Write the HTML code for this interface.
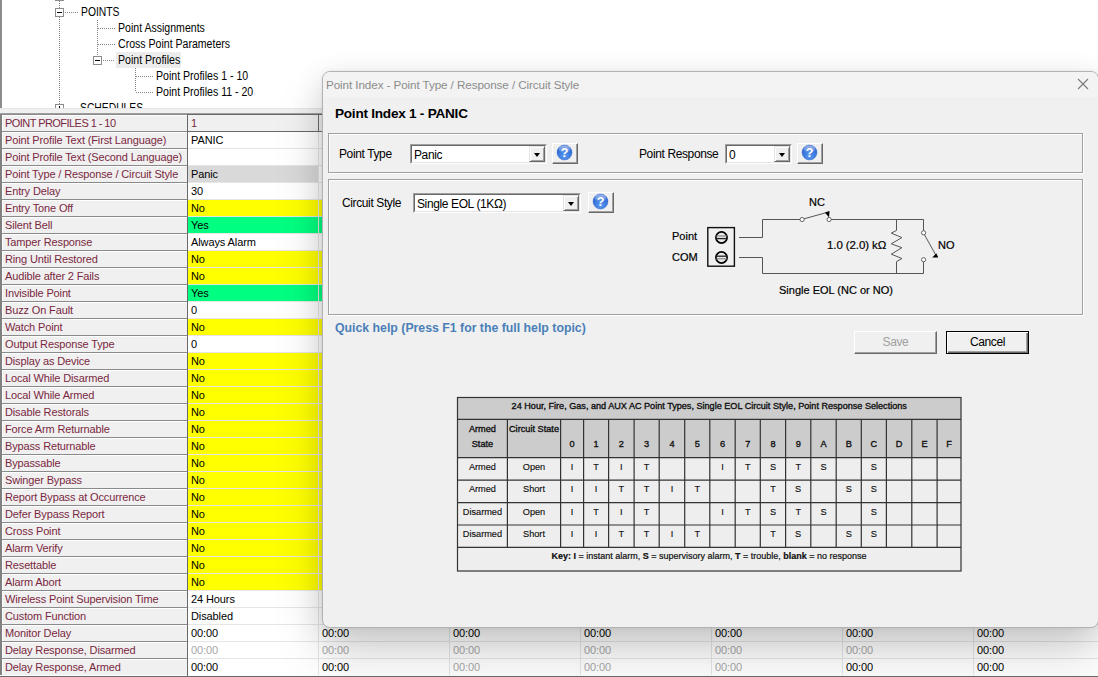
<!DOCTYPE html><html><head><meta charset='utf-8'><style>
*{margin:0;padding:0;box-sizing:border-box}
html,body{width:1098px;height:677px;overflow:hidden;background:#fff;font-family:"Liberation Sans", sans-serif;}
.a{position:absolute}
.t{position:absolute;white-space:nowrap;line-height:1}
.lbl{font-size:11px;color:#7a2840;letter-spacing:-0.14px}
.val{font-size:11px;color:#000;letter-spacing:-0.1px}
.tree{font-size:12px;color:#000;transform:scaleX(0.88);transform-origin:0 0}
.dotv{position:absolute;width:1px;background:repeating-linear-gradient(to bottom,#808080 0 1px,transparent 1px 2px)}
.doth{position:absolute;height:1px;background:repeating-linear-gradient(to right,#808080 0 1px,transparent 1px 2px)}
.box{position:absolute;width:9px;height:9px;border:1px solid #8c8c8c;background:#fff}
.box:after{content:"";position:absolute;left:1px;top:3px;width:5px;height:1px;background:#000}
.dlg{font-size:12px;letter-spacing:-0.38px;color:#000}
.combo{position:absolute;background:#fff;border-top:1px solid #a0a0a0;border-left:1px solid #a0a0a0;border-bottom:1px solid #fff;border-right:1px solid #fff;}
.combo>.in{position:absolute;left:0;top:0;right:0;bottom:0;border-top:1px solid #696969;border-left:1px solid #696969;border-bottom:1px solid #e3e3e3;border-right:1px solid #e3e3e3}
.drop{position:absolute;top:0;right:0;width:16px;bottom:0;background:#f0f0f0;border-top:1px solid #e3e3e3;border-left:1px solid #e3e3e3;border-right:1px solid #696969;border-bottom:1px solid #696969;box-shadow:inset 1px 1px 0 #fff,inset -1px -1px 0 #a0a0a0}
.drop:after{content:"";position:absolute;left:4px;top:6px;border-left:3.5px solid transparent;border-right:3.5px solid transparent;border-top:4px solid #000}
.btn{position:absolute;background:#f0f0f0;border-top:1px solid #fff;border-left:1px solid #fff;border-right:1px solid #696969;border-bottom:1px solid #696969;box-shadow:inset -1px -1px 0 #a0a0a0}
.plus:before{content:'';position:absolute;left:3px;top:1px;width:1px;height:5px;background:#000}
.grp{position:absolute;border:1px solid #a0a0a0;box-shadow:inset 1px 1px 0 #fff,1px 1px 0 #fff}
</style></head><body>
<div class='a' style='left:0;top:0;width:1098px;height:108px;background:#fff;border-left:2px solid #8c8c8c'></div>
<div class='dotv' style='left:59px;top:1px;height:7px'></div>
<div class='dotv' style='left:59px;top:17px;height:88px'></div>
<div class='box' style='left:55px;top:-8px'></div>
<div class='box' style='left:55px;top:8px'></div>
<div class='doth' style='left:65px;top:12px;width:13px'></div>
<div class='t tree' style='left:81px;top:6px;transform:scaleX(0.86)'>POINTS</div>
<div class='dotv' style='left:97px;top:20px;height:36px'></div>
<div class='doth' style='left:98px;top:28px;width:18px'></div>
<div class='t tree' style='left:118px;top:22px'>Point Assignments</div>
<div class='doth' style='left:98px;top:44px;width:18px'></div>
<div class='t tree' style='left:118px;top:38px'>Cross Point Parameters</div>
<div class='box' style='left:93px;top:56px'></div>
<div class='doth' style='left:103px;top:60px;width:12px'></div>
<div class='a' style='left:116px;top:52px;width:65px;height:16px;background:#ececec'></div>
<div class='t tree' style='left:118px;top:54px'>Point Profiles</div>
<div class='dotv' style='left:135px;top:68px;height:24px'></div>
<div class='doth' style='left:136px;top:76px;width:18px'></div>
<div class='t tree' style='left:156px;top:70px'>Point Profiles 1 - 10</div>
<div class='doth' style='left:136px;top:92px;width:18px'></div>
<div class='t tree' style='left:156px;top:86px'>Point Profiles 11 - 20</div>
<div class='box plus' style='left:55px;top:104px'></div>
<div class='t tree' style='left:80px;top:102px;transform:scaleX(0.86)'>SCHEDULES</div>
<div class='a' style='left:0;top:108px;width:1098px;height:5px;background:#f0f0f0;border-top:1px solid #e3e3e3'></div>
<div class='a' style='left:0;top:113px;width:1098px;height:1px;background:#a0a0a0'></div>
<div class='a' style='left:0;top:114px;width:1098px;height:563px;background:#fff'></div>
<div class='a' style='left:0;top:114px;width:187px;height:17px;background:#f0f0f0;border-top:1px solid #8a8a8a;border-left:2px solid #808080;box-shadow:inset 1px 1px 0 #fff'></div>
<div class='t lbl' style='left:5px;top:118px;letter-spacing:-0.55px'>POINT PROFILES 1 - 10</div>
<div class='a' style='left:188px;top:114px;width:910px;height:17px;border-top:1px solid #696969;background:#f0f0f0'></div>
<div class='t val' style='left:191px;top:118px;color:#7a2840'>1</div>
<div class='a' style='left:318px;top:115px;width:1px;height:16px;background:#696969'></div>
<div class='a' style='left:449px;top:115px;width:1px;height:16px;background:#696969'></div>
<div class='a' style='left:580px;top:115px;width:1px;height:16px;background:#696969'></div>
<div class='a' style='left:711px;top:115px;width:1px;height:16px;background:#696969'></div>
<div class='a' style='left:842px;top:115px;width:1px;height:16px;background:#696969'></div>
<div class='a' style='left:973px;top:115px;width:1px;height:16px;background:#696969'></div>
<div class='a' style='left:0;top:131px;width:187px;height:17px;background:#f0f0f0;border-top:1px solid #8a8a8a;border-left:2px solid #808080;box-shadow:inset 1px 1px 0 #fff'></div>
<div class='t lbl' style='left:5px;top:135px'>Point Profile Text (First Language)</div>
<div class='a' style='left:188px;top:131px;width:910px;height:17px;border-top:1px solid #696969;background:#ffffff'></div>
<div class='t val' style='left:191px;top:135px;color:#000'>PANIC</div>
<div class='a' style='left:318px;top:132px;width:1px;height:16px;background:#e6e6e6'></div>
<div class='a' style='left:449px;top:132px;width:1px;height:16px;background:#e6e6e6'></div>
<div class='a' style='left:580px;top:132px;width:1px;height:16px;background:#e6e6e6'></div>
<div class='a' style='left:711px;top:132px;width:1px;height:16px;background:#e6e6e6'></div>
<div class='a' style='left:842px;top:132px;width:1px;height:16px;background:#e6e6e6'></div>
<div class='a' style='left:973px;top:132px;width:1px;height:16px;background:#e6e6e6'></div>
<div class='a' style='left:0;top:148px;width:187px;height:17px;background:#f0f0f0;border-top:1px solid #8a8a8a;border-left:2px solid #808080;box-shadow:inset 1px 1px 0 #fff'></div>
<div class='t lbl' style='left:5px;top:152px'>Point Profile Text (Second Language)</div>
<div class='a' style='left:188px;top:148px;width:910px;height:17px;border-top:1px solid #e6e6e6;background:#ffffff'></div>
<div class='a' style='left:318px;top:149px;width:1px;height:16px;background:#e6e6e6'></div>
<div class='a' style='left:449px;top:149px;width:1px;height:16px;background:#e6e6e6'></div>
<div class='a' style='left:580px;top:149px;width:1px;height:16px;background:#e6e6e6'></div>
<div class='a' style='left:711px;top:149px;width:1px;height:16px;background:#e6e6e6'></div>
<div class='a' style='left:842px;top:149px;width:1px;height:16px;background:#e6e6e6'></div>
<div class='a' style='left:973px;top:149px;width:1px;height:16px;background:#e6e6e6'></div>
<div class='a' style='left:0;top:165px;width:187px;height:17px;background:#f0f0f0;border-top:1px solid #8a8a8a;border-left:2px solid #808080;box-shadow:inset 1px 1px 0 #fff'></div>
<div class='t lbl' style='left:5px;top:169px'>Point Type / Response / Circuit Style</div>
<div class='a' style='left:188px;top:165px;width:910px;height:17px;border-top:1px solid #e6e6e6;background:#fff'></div>
<div class='a' style='left:188px;top:166px;width:130px;height:16px;background:#d9d9d9'></div>
<div class='t val' style='left:191px;top:169px;color:#000'>Panic</div>
<div class='a' style='left:318px;top:166px;width:1px;height:16px;background:#e6e6e6'></div>
<div class='a' style='left:449px;top:166px;width:1px;height:16px;background:#e6e6e6'></div>
<div class='a' style='left:580px;top:166px;width:1px;height:16px;background:#e6e6e6'></div>
<div class='a' style='left:711px;top:166px;width:1px;height:16px;background:#e6e6e6'></div>
<div class='a' style='left:842px;top:166px;width:1px;height:16px;background:#e6e6e6'></div>
<div class='a' style='left:973px;top:166px;width:1px;height:16px;background:#e6e6e6'></div>
<div class='a' style='left:0;top:182px;width:187px;height:17px;background:#f0f0f0;border-top:1px solid #8a8a8a;border-left:2px solid #808080;box-shadow:inset 1px 1px 0 #fff'></div>
<div class='t lbl' style='left:5px;top:186px'>Entry Delay</div>
<div class='a' style='left:188px;top:182px;width:910px;height:17px;border-top:1px solid #e6e6e6;background:#ffffff'></div>
<div class='t val' style='left:191px;top:186px;color:#000'>30</div>
<div class='a' style='left:318px;top:183px;width:1px;height:16px;background:#e6e6e6'></div>
<div class='a' style='left:449px;top:183px;width:1px;height:16px;background:#e6e6e6'></div>
<div class='a' style='left:580px;top:183px;width:1px;height:16px;background:#e6e6e6'></div>
<div class='a' style='left:711px;top:183px;width:1px;height:16px;background:#e6e6e6'></div>
<div class='a' style='left:842px;top:183px;width:1px;height:16px;background:#e6e6e6'></div>
<div class='a' style='left:973px;top:183px;width:1px;height:16px;background:#e6e6e6'></div>
<div class='a' style='left:0;top:199px;width:187px;height:17px;background:#f0f0f0;border-top:1px solid #8a8a8a;border-left:2px solid #808080;box-shadow:inset 1px 1px 0 #fff'></div>
<div class='t lbl' style='left:5px;top:203px'>Entry Tone Off</div>
<div class='a' style='left:188px;top:199px;width:910px;height:17px;border-top:1px solid #e6e6e6;background:#ffff00'></div>
<div class='t val' style='left:191px;top:203px;color:#000'>No</div>
<div class='a' style='left:318px;top:200px;width:1px;height:16px;background:#e6e6e6'></div>
<div class='a' style='left:449px;top:200px;width:1px;height:16px;background:#e6e6e6'></div>
<div class='a' style='left:580px;top:200px;width:1px;height:16px;background:#e6e6e6'></div>
<div class='a' style='left:711px;top:200px;width:1px;height:16px;background:#e6e6e6'></div>
<div class='a' style='left:842px;top:200px;width:1px;height:16px;background:#e6e6e6'></div>
<div class='a' style='left:973px;top:200px;width:1px;height:16px;background:#e6e6e6'></div>
<div class='a' style='left:0;top:216px;width:187px;height:17px;background:#f0f0f0;border-top:1px solid #8a8a8a;border-left:2px solid #808080;box-shadow:inset 1px 1px 0 #fff'></div>
<div class='t lbl' style='left:5px;top:220px'>Silent Bell</div>
<div class='a' style='left:188px;top:216px;width:910px;height:17px;border-top:1px solid #e6e6e6;background:#00ff80'></div>
<div class='t val' style='left:191px;top:220px;color:#000'>Yes</div>
<div class='a' style='left:318px;top:217px;width:1px;height:16px;background:#e6e6e6'></div>
<div class='a' style='left:449px;top:217px;width:1px;height:16px;background:#e6e6e6'></div>
<div class='a' style='left:580px;top:217px;width:1px;height:16px;background:#e6e6e6'></div>
<div class='a' style='left:711px;top:217px;width:1px;height:16px;background:#e6e6e6'></div>
<div class='a' style='left:842px;top:217px;width:1px;height:16px;background:#e6e6e6'></div>
<div class='a' style='left:973px;top:217px;width:1px;height:16px;background:#e6e6e6'></div>
<div class='a' style='left:0;top:233px;width:187px;height:17px;background:#f0f0f0;border-top:1px solid #8a8a8a;border-left:2px solid #808080;box-shadow:inset 1px 1px 0 #fff'></div>
<div class='t lbl' style='left:5px;top:237px'>Tamper Response</div>
<div class='a' style='left:188px;top:233px;width:910px;height:17px;border-top:1px solid #e6e6e6;background:#ffffff'></div>
<div class='t val' style='left:191px;top:237px;color:#000'>Always Alarm</div>
<div class='a' style='left:318px;top:234px;width:1px;height:16px;background:#e6e6e6'></div>
<div class='a' style='left:449px;top:234px;width:1px;height:16px;background:#e6e6e6'></div>
<div class='a' style='left:580px;top:234px;width:1px;height:16px;background:#e6e6e6'></div>
<div class='a' style='left:711px;top:234px;width:1px;height:16px;background:#e6e6e6'></div>
<div class='a' style='left:842px;top:234px;width:1px;height:16px;background:#e6e6e6'></div>
<div class='a' style='left:973px;top:234px;width:1px;height:16px;background:#e6e6e6'></div>
<div class='a' style='left:0;top:250px;width:187px;height:17px;background:#f0f0f0;border-top:1px solid #8a8a8a;border-left:2px solid #808080;box-shadow:inset 1px 1px 0 #fff'></div>
<div class='t lbl' style='left:5px;top:254px'>Ring Until Restored</div>
<div class='a' style='left:188px;top:250px;width:910px;height:17px;border-top:1px solid #e6e6e6;background:#ffff00'></div>
<div class='t val' style='left:191px;top:254px;color:#000'>No</div>
<div class='a' style='left:318px;top:251px;width:1px;height:16px;background:#e6e6e6'></div>
<div class='a' style='left:449px;top:251px;width:1px;height:16px;background:#e6e6e6'></div>
<div class='a' style='left:580px;top:251px;width:1px;height:16px;background:#e6e6e6'></div>
<div class='a' style='left:711px;top:251px;width:1px;height:16px;background:#e6e6e6'></div>
<div class='a' style='left:842px;top:251px;width:1px;height:16px;background:#e6e6e6'></div>
<div class='a' style='left:973px;top:251px;width:1px;height:16px;background:#e6e6e6'></div>
<div class='a' style='left:0;top:267px;width:187px;height:17px;background:#f0f0f0;border-top:1px solid #8a8a8a;border-left:2px solid #808080;box-shadow:inset 1px 1px 0 #fff'></div>
<div class='t lbl' style='left:5px;top:271px'>Audible after 2 Fails</div>
<div class='a' style='left:188px;top:267px;width:910px;height:17px;border-top:1px solid #e6e6e6;background:#ffff00'></div>
<div class='t val' style='left:191px;top:271px;color:#000'>No</div>
<div class='a' style='left:318px;top:268px;width:1px;height:16px;background:#e6e6e6'></div>
<div class='a' style='left:449px;top:268px;width:1px;height:16px;background:#e6e6e6'></div>
<div class='a' style='left:580px;top:268px;width:1px;height:16px;background:#e6e6e6'></div>
<div class='a' style='left:711px;top:268px;width:1px;height:16px;background:#e6e6e6'></div>
<div class='a' style='left:842px;top:268px;width:1px;height:16px;background:#e6e6e6'></div>
<div class='a' style='left:973px;top:268px;width:1px;height:16px;background:#e6e6e6'></div>
<div class='a' style='left:0;top:284px;width:187px;height:17px;background:#f0f0f0;border-top:1px solid #8a8a8a;border-left:2px solid #808080;box-shadow:inset 1px 1px 0 #fff'></div>
<div class='t lbl' style='left:5px;top:288px'>Invisible Point</div>
<div class='a' style='left:188px;top:284px;width:910px;height:17px;border-top:1px solid #e6e6e6;background:#00ff80'></div>
<div class='t val' style='left:191px;top:288px;color:#000'>Yes</div>
<div class='a' style='left:318px;top:285px;width:1px;height:16px;background:#e6e6e6'></div>
<div class='a' style='left:449px;top:285px;width:1px;height:16px;background:#e6e6e6'></div>
<div class='a' style='left:580px;top:285px;width:1px;height:16px;background:#e6e6e6'></div>
<div class='a' style='left:711px;top:285px;width:1px;height:16px;background:#e6e6e6'></div>
<div class='a' style='left:842px;top:285px;width:1px;height:16px;background:#e6e6e6'></div>
<div class='a' style='left:973px;top:285px;width:1px;height:16px;background:#e6e6e6'></div>
<div class='a' style='left:0;top:301px;width:187px;height:17px;background:#f0f0f0;border-top:1px solid #8a8a8a;border-left:2px solid #808080;box-shadow:inset 1px 1px 0 #fff'></div>
<div class='t lbl' style='left:5px;top:305px'>Buzz On Fault</div>
<div class='a' style='left:188px;top:301px;width:910px;height:17px;border-top:1px solid #e6e6e6;background:#ffffff'></div>
<div class='t val' style='left:191px;top:305px;color:#000'>0</div>
<div class='a' style='left:318px;top:302px;width:1px;height:16px;background:#e6e6e6'></div>
<div class='a' style='left:449px;top:302px;width:1px;height:16px;background:#e6e6e6'></div>
<div class='a' style='left:580px;top:302px;width:1px;height:16px;background:#e6e6e6'></div>
<div class='a' style='left:711px;top:302px;width:1px;height:16px;background:#e6e6e6'></div>
<div class='a' style='left:842px;top:302px;width:1px;height:16px;background:#e6e6e6'></div>
<div class='a' style='left:973px;top:302px;width:1px;height:16px;background:#e6e6e6'></div>
<div class='a' style='left:0;top:318px;width:187px;height:17px;background:#f0f0f0;border-top:1px solid #8a8a8a;border-left:2px solid #808080;box-shadow:inset 1px 1px 0 #fff'></div>
<div class='t lbl' style='left:5px;top:322px'>Watch Point</div>
<div class='a' style='left:188px;top:318px;width:910px;height:17px;border-top:1px solid #e6e6e6;background:#ffff00'></div>
<div class='t val' style='left:191px;top:322px;color:#000'>No</div>
<div class='a' style='left:318px;top:319px;width:1px;height:16px;background:#e6e6e6'></div>
<div class='a' style='left:449px;top:319px;width:1px;height:16px;background:#e6e6e6'></div>
<div class='a' style='left:580px;top:319px;width:1px;height:16px;background:#e6e6e6'></div>
<div class='a' style='left:711px;top:319px;width:1px;height:16px;background:#e6e6e6'></div>
<div class='a' style='left:842px;top:319px;width:1px;height:16px;background:#e6e6e6'></div>
<div class='a' style='left:973px;top:319px;width:1px;height:16px;background:#e6e6e6'></div>
<div class='a' style='left:0;top:335px;width:187px;height:17px;background:#f0f0f0;border-top:1px solid #8a8a8a;border-left:2px solid #808080;box-shadow:inset 1px 1px 0 #fff'></div>
<div class='t lbl' style='left:5px;top:339px'>Output Response Type</div>
<div class='a' style='left:188px;top:335px;width:910px;height:17px;border-top:1px solid #e6e6e6;background:#ffffff'></div>
<div class='t val' style='left:191px;top:339px;color:#000'>0</div>
<div class='a' style='left:318px;top:336px;width:1px;height:16px;background:#e6e6e6'></div>
<div class='a' style='left:449px;top:336px;width:1px;height:16px;background:#e6e6e6'></div>
<div class='a' style='left:580px;top:336px;width:1px;height:16px;background:#e6e6e6'></div>
<div class='a' style='left:711px;top:336px;width:1px;height:16px;background:#e6e6e6'></div>
<div class='a' style='left:842px;top:336px;width:1px;height:16px;background:#e6e6e6'></div>
<div class='a' style='left:973px;top:336px;width:1px;height:16px;background:#e6e6e6'></div>
<div class='a' style='left:0;top:352px;width:187px;height:17px;background:#f0f0f0;border-top:1px solid #8a8a8a;border-left:2px solid #808080;box-shadow:inset 1px 1px 0 #fff'></div>
<div class='t lbl' style='left:5px;top:356px'>Display as Device</div>
<div class='a' style='left:188px;top:352px;width:910px;height:17px;border-top:1px solid #e6e6e6;background:#ffff00'></div>
<div class='t val' style='left:191px;top:356px;color:#000'>No</div>
<div class='a' style='left:318px;top:353px;width:1px;height:16px;background:#e6e6e6'></div>
<div class='a' style='left:449px;top:353px;width:1px;height:16px;background:#e6e6e6'></div>
<div class='a' style='left:580px;top:353px;width:1px;height:16px;background:#e6e6e6'></div>
<div class='a' style='left:711px;top:353px;width:1px;height:16px;background:#e6e6e6'></div>
<div class='a' style='left:842px;top:353px;width:1px;height:16px;background:#e6e6e6'></div>
<div class='a' style='left:973px;top:353px;width:1px;height:16px;background:#e6e6e6'></div>
<div class='a' style='left:0;top:369px;width:187px;height:17px;background:#f0f0f0;border-top:1px solid #8a8a8a;border-left:2px solid #808080;box-shadow:inset 1px 1px 0 #fff'></div>
<div class='t lbl' style='left:5px;top:373px'>Local While Disarmed</div>
<div class='a' style='left:188px;top:369px;width:910px;height:17px;border-top:1px solid #e6e6e6;background:#ffff00'></div>
<div class='t val' style='left:191px;top:373px;color:#000'>No</div>
<div class='a' style='left:318px;top:370px;width:1px;height:16px;background:#e6e6e6'></div>
<div class='a' style='left:449px;top:370px;width:1px;height:16px;background:#e6e6e6'></div>
<div class='a' style='left:580px;top:370px;width:1px;height:16px;background:#e6e6e6'></div>
<div class='a' style='left:711px;top:370px;width:1px;height:16px;background:#e6e6e6'></div>
<div class='a' style='left:842px;top:370px;width:1px;height:16px;background:#e6e6e6'></div>
<div class='a' style='left:973px;top:370px;width:1px;height:16px;background:#e6e6e6'></div>
<div class='a' style='left:0;top:386px;width:187px;height:17px;background:#f0f0f0;border-top:1px solid #8a8a8a;border-left:2px solid #808080;box-shadow:inset 1px 1px 0 #fff'></div>
<div class='t lbl' style='left:5px;top:390px'>Local While Armed</div>
<div class='a' style='left:188px;top:386px;width:910px;height:17px;border-top:1px solid #e6e6e6;background:#ffff00'></div>
<div class='t val' style='left:191px;top:390px;color:#000'>No</div>
<div class='a' style='left:318px;top:387px;width:1px;height:16px;background:#e6e6e6'></div>
<div class='a' style='left:449px;top:387px;width:1px;height:16px;background:#e6e6e6'></div>
<div class='a' style='left:580px;top:387px;width:1px;height:16px;background:#e6e6e6'></div>
<div class='a' style='left:711px;top:387px;width:1px;height:16px;background:#e6e6e6'></div>
<div class='a' style='left:842px;top:387px;width:1px;height:16px;background:#e6e6e6'></div>
<div class='a' style='left:973px;top:387px;width:1px;height:16px;background:#e6e6e6'></div>
<div class='a' style='left:0;top:403px;width:187px;height:17px;background:#f0f0f0;border-top:1px solid #8a8a8a;border-left:2px solid #808080;box-shadow:inset 1px 1px 0 #fff'></div>
<div class='t lbl' style='left:5px;top:407px'>Disable Restorals</div>
<div class='a' style='left:188px;top:403px;width:910px;height:17px;border-top:1px solid #e6e6e6;background:#ffff00'></div>
<div class='t val' style='left:191px;top:407px;color:#000'>No</div>
<div class='a' style='left:318px;top:404px;width:1px;height:16px;background:#e6e6e6'></div>
<div class='a' style='left:449px;top:404px;width:1px;height:16px;background:#e6e6e6'></div>
<div class='a' style='left:580px;top:404px;width:1px;height:16px;background:#e6e6e6'></div>
<div class='a' style='left:711px;top:404px;width:1px;height:16px;background:#e6e6e6'></div>
<div class='a' style='left:842px;top:404px;width:1px;height:16px;background:#e6e6e6'></div>
<div class='a' style='left:973px;top:404px;width:1px;height:16px;background:#e6e6e6'></div>
<div class='a' style='left:0;top:420px;width:187px;height:17px;background:#f0f0f0;border-top:1px solid #8a8a8a;border-left:2px solid #808080;box-shadow:inset 1px 1px 0 #fff'></div>
<div class='t lbl' style='left:5px;top:424px'>Force Arm Returnable</div>
<div class='a' style='left:188px;top:420px;width:910px;height:17px;border-top:1px solid #e6e6e6;background:#ffff00'></div>
<div class='t val' style='left:191px;top:424px;color:#000'>No</div>
<div class='a' style='left:318px;top:421px;width:1px;height:16px;background:#e6e6e6'></div>
<div class='a' style='left:449px;top:421px;width:1px;height:16px;background:#e6e6e6'></div>
<div class='a' style='left:580px;top:421px;width:1px;height:16px;background:#e6e6e6'></div>
<div class='a' style='left:711px;top:421px;width:1px;height:16px;background:#e6e6e6'></div>
<div class='a' style='left:842px;top:421px;width:1px;height:16px;background:#e6e6e6'></div>
<div class='a' style='left:973px;top:421px;width:1px;height:16px;background:#e6e6e6'></div>
<div class='a' style='left:0;top:437px;width:187px;height:17px;background:#f0f0f0;border-top:1px solid #8a8a8a;border-left:2px solid #808080;box-shadow:inset 1px 1px 0 #fff'></div>
<div class='t lbl' style='left:5px;top:441px'>Bypass Returnable</div>
<div class='a' style='left:188px;top:437px;width:910px;height:17px;border-top:1px solid #e6e6e6;background:#ffff00'></div>
<div class='t val' style='left:191px;top:441px;color:#000'>No</div>
<div class='a' style='left:318px;top:438px;width:1px;height:16px;background:#e6e6e6'></div>
<div class='a' style='left:449px;top:438px;width:1px;height:16px;background:#e6e6e6'></div>
<div class='a' style='left:580px;top:438px;width:1px;height:16px;background:#e6e6e6'></div>
<div class='a' style='left:711px;top:438px;width:1px;height:16px;background:#e6e6e6'></div>
<div class='a' style='left:842px;top:438px;width:1px;height:16px;background:#e6e6e6'></div>
<div class='a' style='left:973px;top:438px;width:1px;height:16px;background:#e6e6e6'></div>
<div class='a' style='left:0;top:454px;width:187px;height:17px;background:#f0f0f0;border-top:1px solid #8a8a8a;border-left:2px solid #808080;box-shadow:inset 1px 1px 0 #fff'></div>
<div class='t lbl' style='left:5px;top:458px'>Bypassable</div>
<div class='a' style='left:188px;top:454px;width:910px;height:17px;border-top:1px solid #e6e6e6;background:#ffff00'></div>
<div class='t val' style='left:191px;top:458px;color:#000'>No</div>
<div class='a' style='left:318px;top:455px;width:1px;height:16px;background:#e6e6e6'></div>
<div class='a' style='left:449px;top:455px;width:1px;height:16px;background:#e6e6e6'></div>
<div class='a' style='left:580px;top:455px;width:1px;height:16px;background:#e6e6e6'></div>
<div class='a' style='left:711px;top:455px;width:1px;height:16px;background:#e6e6e6'></div>
<div class='a' style='left:842px;top:455px;width:1px;height:16px;background:#e6e6e6'></div>
<div class='a' style='left:973px;top:455px;width:1px;height:16px;background:#e6e6e6'></div>
<div class='a' style='left:0;top:471px;width:187px;height:17px;background:#f0f0f0;border-top:1px solid #8a8a8a;border-left:2px solid #808080;box-shadow:inset 1px 1px 0 #fff'></div>
<div class='t lbl' style='left:5px;top:475px'>Swinger Bypass</div>
<div class='a' style='left:188px;top:471px;width:910px;height:17px;border-top:1px solid #e6e6e6;background:#ffff00'></div>
<div class='t val' style='left:191px;top:475px;color:#000'>No</div>
<div class='a' style='left:318px;top:472px;width:1px;height:16px;background:#e6e6e6'></div>
<div class='a' style='left:449px;top:472px;width:1px;height:16px;background:#e6e6e6'></div>
<div class='a' style='left:580px;top:472px;width:1px;height:16px;background:#e6e6e6'></div>
<div class='a' style='left:711px;top:472px;width:1px;height:16px;background:#e6e6e6'></div>
<div class='a' style='left:842px;top:472px;width:1px;height:16px;background:#e6e6e6'></div>
<div class='a' style='left:973px;top:472px;width:1px;height:16px;background:#e6e6e6'></div>
<div class='a' style='left:0;top:488px;width:187px;height:17px;background:#f0f0f0;border-top:1px solid #8a8a8a;border-left:2px solid #808080;box-shadow:inset 1px 1px 0 #fff'></div>
<div class='t lbl' style='left:5px;top:492px'>Report Bypass at Occurrence</div>
<div class='a' style='left:188px;top:488px;width:910px;height:17px;border-top:1px solid #e6e6e6;background:#ffff00'></div>
<div class='t val' style='left:191px;top:492px;color:#000'>No</div>
<div class='a' style='left:318px;top:489px;width:1px;height:16px;background:#e6e6e6'></div>
<div class='a' style='left:449px;top:489px;width:1px;height:16px;background:#e6e6e6'></div>
<div class='a' style='left:580px;top:489px;width:1px;height:16px;background:#e6e6e6'></div>
<div class='a' style='left:711px;top:489px;width:1px;height:16px;background:#e6e6e6'></div>
<div class='a' style='left:842px;top:489px;width:1px;height:16px;background:#e6e6e6'></div>
<div class='a' style='left:973px;top:489px;width:1px;height:16px;background:#e6e6e6'></div>
<div class='a' style='left:0;top:505px;width:187px;height:17px;background:#f0f0f0;border-top:1px solid #8a8a8a;border-left:2px solid #808080;box-shadow:inset 1px 1px 0 #fff'></div>
<div class='t lbl' style='left:5px;top:509px'>Defer Bypass Report</div>
<div class='a' style='left:188px;top:505px;width:910px;height:17px;border-top:1px solid #e6e6e6;background:#ffff00'></div>
<div class='t val' style='left:191px;top:509px;color:#000'>No</div>
<div class='a' style='left:318px;top:506px;width:1px;height:16px;background:#e6e6e6'></div>
<div class='a' style='left:449px;top:506px;width:1px;height:16px;background:#e6e6e6'></div>
<div class='a' style='left:580px;top:506px;width:1px;height:16px;background:#e6e6e6'></div>
<div class='a' style='left:711px;top:506px;width:1px;height:16px;background:#e6e6e6'></div>
<div class='a' style='left:842px;top:506px;width:1px;height:16px;background:#e6e6e6'></div>
<div class='a' style='left:973px;top:506px;width:1px;height:16px;background:#e6e6e6'></div>
<div class='a' style='left:0;top:522px;width:187px;height:17px;background:#f0f0f0;border-top:1px solid #8a8a8a;border-left:2px solid #808080;box-shadow:inset 1px 1px 0 #fff'></div>
<div class='t lbl' style='left:5px;top:526px'>Cross Point</div>
<div class='a' style='left:188px;top:522px;width:910px;height:17px;border-top:1px solid #e6e6e6;background:#ffff00'></div>
<div class='t val' style='left:191px;top:526px;color:#000'>No</div>
<div class='a' style='left:318px;top:523px;width:1px;height:16px;background:#e6e6e6'></div>
<div class='a' style='left:449px;top:523px;width:1px;height:16px;background:#e6e6e6'></div>
<div class='a' style='left:580px;top:523px;width:1px;height:16px;background:#e6e6e6'></div>
<div class='a' style='left:711px;top:523px;width:1px;height:16px;background:#e6e6e6'></div>
<div class='a' style='left:842px;top:523px;width:1px;height:16px;background:#e6e6e6'></div>
<div class='a' style='left:973px;top:523px;width:1px;height:16px;background:#e6e6e6'></div>
<div class='a' style='left:0;top:539px;width:187px;height:17px;background:#f0f0f0;border-top:1px solid #8a8a8a;border-left:2px solid #808080;box-shadow:inset 1px 1px 0 #fff'></div>
<div class='t lbl' style='left:5px;top:543px'>Alarm Verify</div>
<div class='a' style='left:188px;top:539px;width:910px;height:17px;border-top:1px solid #e6e6e6;background:#ffff00'></div>
<div class='t val' style='left:191px;top:543px;color:#000'>No</div>
<div class='a' style='left:318px;top:540px;width:1px;height:16px;background:#e6e6e6'></div>
<div class='a' style='left:449px;top:540px;width:1px;height:16px;background:#e6e6e6'></div>
<div class='a' style='left:580px;top:540px;width:1px;height:16px;background:#e6e6e6'></div>
<div class='a' style='left:711px;top:540px;width:1px;height:16px;background:#e6e6e6'></div>
<div class='a' style='left:842px;top:540px;width:1px;height:16px;background:#e6e6e6'></div>
<div class='a' style='left:973px;top:540px;width:1px;height:16px;background:#e6e6e6'></div>
<div class='a' style='left:0;top:556px;width:187px;height:17px;background:#f0f0f0;border-top:1px solid #8a8a8a;border-left:2px solid #808080;box-shadow:inset 1px 1px 0 #fff'></div>
<div class='t lbl' style='left:5px;top:560px'>Resettable</div>
<div class='a' style='left:188px;top:556px;width:910px;height:17px;border-top:1px solid #e6e6e6;background:#ffff00'></div>
<div class='t val' style='left:191px;top:560px;color:#000'>No</div>
<div class='a' style='left:318px;top:557px;width:1px;height:16px;background:#e6e6e6'></div>
<div class='a' style='left:449px;top:557px;width:1px;height:16px;background:#e6e6e6'></div>
<div class='a' style='left:580px;top:557px;width:1px;height:16px;background:#e6e6e6'></div>
<div class='a' style='left:711px;top:557px;width:1px;height:16px;background:#e6e6e6'></div>
<div class='a' style='left:842px;top:557px;width:1px;height:16px;background:#e6e6e6'></div>
<div class='a' style='left:973px;top:557px;width:1px;height:16px;background:#e6e6e6'></div>
<div class='a' style='left:0;top:573px;width:187px;height:17px;background:#f0f0f0;border-top:1px solid #8a8a8a;border-left:2px solid #808080;box-shadow:inset 1px 1px 0 #fff'></div>
<div class='t lbl' style='left:5px;top:577px'>Alarm Abort</div>
<div class='a' style='left:188px;top:573px;width:910px;height:17px;border-top:1px solid #e6e6e6;background:#ffff00'></div>
<div class='t val' style='left:191px;top:577px;color:#000'>No</div>
<div class='a' style='left:318px;top:574px;width:1px;height:16px;background:#e6e6e6'></div>
<div class='a' style='left:449px;top:574px;width:1px;height:16px;background:#e6e6e6'></div>
<div class='a' style='left:580px;top:574px;width:1px;height:16px;background:#e6e6e6'></div>
<div class='a' style='left:711px;top:574px;width:1px;height:16px;background:#e6e6e6'></div>
<div class='a' style='left:842px;top:574px;width:1px;height:16px;background:#e6e6e6'></div>
<div class='a' style='left:973px;top:574px;width:1px;height:16px;background:#e6e6e6'></div>
<div class='a' style='left:0;top:590px;width:187px;height:17px;background:#f0f0f0;border-top:1px solid #8a8a8a;border-left:2px solid #808080;box-shadow:inset 1px 1px 0 #fff'></div>
<div class='t lbl' style='left:5px;top:594px'>Wireless Point Supervision Time</div>
<div class='a' style='left:188px;top:590px;width:910px;height:17px;border-top:1px solid #e6e6e6;background:#ffffff'></div>
<div class='t val' style='left:191px;top:594px;color:#000'>24 Hours</div>
<div class='a' style='left:318px;top:591px;width:1px;height:16px;background:#e6e6e6'></div>
<div class='a' style='left:449px;top:591px;width:1px;height:16px;background:#e6e6e6'></div>
<div class='a' style='left:580px;top:591px;width:1px;height:16px;background:#e6e6e6'></div>
<div class='a' style='left:711px;top:591px;width:1px;height:16px;background:#e6e6e6'></div>
<div class='a' style='left:842px;top:591px;width:1px;height:16px;background:#e6e6e6'></div>
<div class='a' style='left:973px;top:591px;width:1px;height:16px;background:#e6e6e6'></div>
<div class='a' style='left:0;top:607px;width:187px;height:17px;background:#f0f0f0;border-top:1px solid #8a8a8a;border-left:2px solid #808080;box-shadow:inset 1px 1px 0 #fff'></div>
<div class='t lbl' style='left:5px;top:611px'>Custom Function</div>
<div class='a' style='left:188px;top:607px;width:910px;height:17px;border-top:1px solid #e6e6e6;background:#ffffff'></div>
<div class='t val' style='left:191px;top:611px;color:#000'>Disabled</div>
<div class='a' style='left:318px;top:608px;width:1px;height:16px;background:#e6e6e6'></div>
<div class='a' style='left:449px;top:608px;width:1px;height:16px;background:#e6e6e6'></div>
<div class='a' style='left:580px;top:608px;width:1px;height:16px;background:#e6e6e6'></div>
<div class='a' style='left:711px;top:608px;width:1px;height:16px;background:#e6e6e6'></div>
<div class='a' style='left:842px;top:608px;width:1px;height:16px;background:#e6e6e6'></div>
<div class='a' style='left:973px;top:608px;width:1px;height:16px;background:#e6e6e6'></div>
<div class='a' style='left:0;top:624px;width:187px;height:17px;background:#f0f0f0;border-top:1px solid #8a8a8a;border-left:2px solid #808080;box-shadow:inset 1px 1px 0 #fff'></div>
<div class='t lbl' style='left:5px;top:628px'>Monitor Delay</div>
<div class='a' style='left:188px;top:624px;width:910px;height:17px;border-top:1px solid #e6e6e6;background:#ffffff'></div>
<div class='t val' style='left:191px;top:628px;color:#000'>00:00</div>
<div class='a' style='left:318px;top:625px;width:1px;height:16px;background:#e6e6e6'></div>
<div class='a' style='left:449px;top:625px;width:1px;height:16px;background:#e6e6e6'></div>
<div class='a' style='left:580px;top:625px;width:1px;height:16px;background:#e6e6e6'></div>
<div class='a' style='left:711px;top:625px;width:1px;height:16px;background:#e6e6e6'></div>
<div class='a' style='left:842px;top:625px;width:1px;height:16px;background:#e6e6e6'></div>
<div class='a' style='left:973px;top:625px;width:1px;height:16px;background:#e6e6e6'></div>
<div class='a' style='left:0;top:641px;width:187px;height:17px;background:#f0f0f0;border-top:1px solid #8a8a8a;border-left:2px solid #808080;box-shadow:inset 1px 1px 0 #fff'></div>
<div class='t lbl' style='left:5px;top:645px'>Delay Response, Disarmed</div>
<div class='a' style='left:188px;top:641px;width:910px;height:17px;border-top:1px solid #e6e6e6;background:#ffffff'></div>
<div class='t val' style='left:191px;top:645px;color:#a8a8a8'>00:00</div>
<div class='a' style='left:318px;top:642px;width:1px;height:16px;background:#e6e6e6'></div>
<div class='a' style='left:449px;top:642px;width:1px;height:16px;background:#e6e6e6'></div>
<div class='a' style='left:580px;top:642px;width:1px;height:16px;background:#e6e6e6'></div>
<div class='a' style='left:711px;top:642px;width:1px;height:16px;background:#e6e6e6'></div>
<div class='a' style='left:842px;top:642px;width:1px;height:16px;background:#e6e6e6'></div>
<div class='a' style='left:973px;top:642px;width:1px;height:16px;background:#e6e6e6'></div>
<div class='a' style='left:0;top:658px;width:187px;height:17px;background:#f0f0f0;border-top:1px solid #8a8a8a;border-left:2px solid #808080;box-shadow:inset 1px 1px 0 #fff'></div>
<div class='t lbl' style='left:5px;top:662px'>Delay Response, Armed</div>
<div class='a' style='left:188px;top:658px;width:910px;height:17px;border-top:1px solid #e6e6e6;background:#ffffff'></div>
<div class='t val' style='left:191px;top:662px;color:#000'>00:00</div>
<div class='a' style='left:318px;top:659px;width:1px;height:16px;background:#e6e6e6'></div>
<div class='a' style='left:449px;top:659px;width:1px;height:16px;background:#e6e6e6'></div>
<div class='a' style='left:580px;top:659px;width:1px;height:16px;background:#e6e6e6'></div>
<div class='a' style='left:711px;top:659px;width:1px;height:16px;background:#e6e6e6'></div>
<div class='a' style='left:842px;top:659px;width:1px;height:16px;background:#e6e6e6'></div>
<div class='a' style='left:973px;top:659px;width:1px;height:16px;background:#e6e6e6'></div>
<div class='t val' style='left:322px;top:628px;color:#000'>00:00</div>
<div class='t val' style='left:453px;top:628px;color:#000'>00:00</div>
<div class='t val' style='left:584px;top:628px;color:#000'>00:00</div>
<div class='t val' style='left:715px;top:628px;color:#000'>00:00</div>
<div class='t val' style='left:846px;top:628px;color:#000'>00:00</div>
<div class='t val' style='left:977px;top:628px;color:#000'>00:00</div>
<div class='t val' style='left:322px;top:645px;color:#a8a8a8'>00:00</div>
<div class='t val' style='left:453px;top:645px;color:#a8a8a8'>00:00</div>
<div class='t val' style='left:584px;top:645px;color:#a8a8a8'>00:00</div>
<div class='t val' style='left:715px;top:645px;color:#a8a8a8'>00:00</div>
<div class='t val' style='left:846px;top:645px;color:#a8a8a8'>00:00</div>
<div class='t val' style='left:977px;top:645px;color:#000'>00:00</div>
<div class='t val' style='left:322px;top:662px;color:#000'>00:00</div>
<div class='t val' style='left:453px;top:662px;color:#a8a8a8'>00:00</div>
<div class='t val' style='left:584px;top:662px;color:#a8a8a8'>00:00</div>
<div class='t val' style='left:715px;top:662px;color:#a8a8a8'>00:00</div>
<div class='t val' style='left:846px;top:662px;color:#000'>00:00</div>
<div class='t val' style='left:977px;top:662px;color:#000'>00:00</div>
<div class='a' style='left:187px;top:114px;width:1px;height:563px;background:#696969'></div>
<div class='a' style='left:0;top:676px;width:1098px;height:1px;background:#696969'></div>
<div class='a' style='left:322px;top:71px;width:777px;height:557px;background:#f0f0f0;border:1px solid #b2b2b2;border-radius:8px;box-shadow:0 8px 30px rgba(0,0,0,0.12),0 28px 50px rgba(0,0,0,0.15),0 0 4px rgba(0,0,0,0.06)'></div>
<div class='a' style='left:323px;top:72px;width:775px;height:25px;border-radius:7px 7px 0 0;background:#f3f3f3'></div>
<div class='t' style='left:326px;top:79px;font-size:11.7px;color:#8c8c8c;letter-spacing:-0.1px'>Point Index - Point Type / Response / Circuit Style</div>
<svg class='a' style='left:1076px;top:77px' width='14' height='14'><path d='M2 2L12 12M12 2L2 12' stroke='#7a7a7a' stroke-width='1.1'/></svg>
<div class='t' style='left:335px;top:107px;font-size:13.6px;font-weight:bold;letter-spacing:-0.25px;color:#000'>Point Index 1 - PANIC</div>
<div class='grp' style='left:328px;top:133px;width:755px;height:40px'></div>
<div class='t dlg' style='left:339px;top:148px'>Point Type</div>
<div class='combo' style='left:410px;top:144px;width:137px;height:20px'><div class='in'><div class='drop'></div></div></div>
<div class='t dlg' style='left:414px;top:149px'>Panic</div>
<div class='btn' style='left:552px;top:143px;width:26px;height:21px'></div>
<svg class='a' style='left:556px;top:144px' width='17' height='17' viewBox='0 0 17 17'><defs><radialGradient id='hg552' cx='0.5' cy='0.75' r='0.6'><stop offset='0' stop-color='#5b9cf0'/><stop offset='1' stop-color='#2a66d6'/></radialGradient><linearGradient id='hl552' x1='0' y1='0' x2='0' y2='1'><stop offset='0' stop-color='#ffffff' stop-opacity='0.55'/><stop offset='1' stop-color='#ffffff' stop-opacity='0.05'/></linearGradient></defs><circle cx='8.5' cy='8.5' r='7.5' fill='url(#hg552)' stroke='#3a6cc8' stroke-width='0.5'/><ellipse cx='8.5' cy='5.2' rx='5.8' ry='3.8' fill='url(#hl552)'/><text x='8.6' y='13' text-anchor='middle' font-family='Liberation Sans' font-weight='bold' font-size='12.5' fill='#fff'>?</text></svg>
<div class='t dlg' style='left:639px;top:148px'>Point Response</div>
<div class='combo' style='left:725px;top:144px;width:67px;height:20px'><div class='in'><div class='drop'></div></div></div>
<div class='t dlg' style='left:729px;top:149px'>0</div>
<div class='btn' style='left:797px;top:143px;width:26px;height:21px'></div>
<svg class='a' style='left:801px;top:144px' width='17' height='17' viewBox='0 0 17 17'><defs><radialGradient id='hg797' cx='0.5' cy='0.75' r='0.6'><stop offset='0' stop-color='#5b9cf0'/><stop offset='1' stop-color='#2a66d6'/></radialGradient><linearGradient id='hl797' x1='0' y1='0' x2='0' y2='1'><stop offset='0' stop-color='#ffffff' stop-opacity='0.55'/><stop offset='1' stop-color='#ffffff' stop-opacity='0.05'/></linearGradient></defs><circle cx='8.5' cy='8.5' r='7.5' fill='url(#hg797)' stroke='#3a6cc8' stroke-width='0.5'/><ellipse cx='8.5' cy='5.2' rx='5.8' ry='3.8' fill='url(#hl797)'/><text x='8.6' y='13' text-anchor='middle' font-family='Liberation Sans' font-weight='bold' font-size='12.5' fill='#fff'>?</text></svg>
<div class='grp' style='left:328px;top:179px;width:755px;height:136px'></div>
<div class='t dlg' style='left:342px;top:197px'>Circuit Style</div>
<div class='combo' style='left:413px;top:193px;width:168px;height:20px'><div class='in'><div class='drop'></div></div></div>
<div class='t dlg' style='left:417px;top:198px'>Single EOL (1K&Omega;)</div>
<div class='btn' style='left:588px;top:192px;width:26px;height:21px'></div>
<svg class='a' style='left:592px;top:193px' width='17' height='17' viewBox='0 0 17 17'><defs><radialGradient id='hg588' cx='0.5' cy='0.75' r='0.6'><stop offset='0' stop-color='#5b9cf0'/><stop offset='1' stop-color='#2a66d6'/></radialGradient><linearGradient id='hl588' x1='0' y1='0' x2='0' y2='1'><stop offset='0' stop-color='#ffffff' stop-opacity='0.55'/><stop offset='1' stop-color='#ffffff' stop-opacity='0.05'/></linearGradient></defs><circle cx='8.5' cy='8.5' r='7.5' fill='url(#hg588)' stroke='#3a6cc8' stroke-width='0.5'/><ellipse cx='8.5' cy='5.2' rx='5.8' ry='3.8' fill='url(#hl588)'/><text x='8.6' y='13' text-anchor='middle' font-family='Liberation Sans' font-weight='bold' font-size='12.5' fill='#fff'>?</text></svg>
<svg class='a' style='left:0;top:0' width='1098' height='677' viewBox='0 0 1098 677'><g fill='none' stroke='#555' stroke-width='1'><path d='M739 237.5H762.5V219.5H800M804 218.8L825.5 212.9M831 219.5H923.5V230.8M924.5 234.8L935.5 254.5M923.5 261.7V273.5H762.5V257.5H739'/><path d='M896.5 219.5V230.4L891.3 233.1L901.9 237.6L891.3 243.8L901.9 247.7L891.3 254.2L901.9 258.5L896.5 261.6V273.5'/></g><circle cx='802.1' cy='219.5' r='2.1' fill='#fff' stroke='#555' stroke-width='0.9'/><circle cx='829.1' cy='219.5' r='2.1' fill='#fff' stroke='#555' stroke-width='0.9'/><circle cx='923.6' cy='232.8' r='2.1' fill='#fff' stroke='#555' stroke-width='0.9'/><circle cx='923.6' cy='259.7' r='2.1' fill='#fff' stroke='#555' stroke-width='0.9'/><path d='M824.8 212.6L829.6 211L829 217.3Z' fill='#000'/><path d='M932.3 257.5L938.2 257.5L936.3 253.2Z' fill='#000'/><rect x='707.8' y='227.6' width='26.6' height='38.6' fill='none' stroke='#111' stroke-width='1.4'/><circle cx='721.5' cy='237.5' r='5.6' fill='#e8e8e8' stroke='#000' stroke-width='1.7'/><path d='M716 236H727' stroke='#777' stroke-width='1'/><path d='M716 238.6H727' stroke='#222' stroke-width='1.3'/><circle cx='721.5' cy='257.5' r='5.6' fill='#e8e8e8' stroke='#000' stroke-width='1.7'/><path d='M716 256.2H727' stroke='#222' stroke-width='1.3'/><path d='M716 258.8H727' stroke='#777' stroke-width='1'/></svg>
<div style='position:absolute;white-space:nowrap;line-height:1;font-size:11px;color:#000;-webkit-text-stroke:0.2px #000;left:672px;top:231px'>Point</div>
<div style='position:absolute;white-space:nowrap;line-height:1;font-size:11px;color:#000;-webkit-text-stroke:0.2px #000;left:672px;top:252px'>COM</div>
<div style='position:absolute;white-space:nowrap;line-height:1;font-size:11px;color:#000;-webkit-text-stroke:0.2px #000;left:809px;top:197px'>NC</div>
<div style='position:absolute;white-space:nowrap;line-height:1;font-size:11px;color:#000;-webkit-text-stroke:0.2px #000;left:827px;top:240px;font-size:11.5px;letter-spacing:-0.1px'>1.0 (2.0) k&Omega;</div>
<div style='position:absolute;white-space:nowrap;line-height:1;font-size:11px;color:#000;-webkit-text-stroke:0.2px #000;left:938px;top:240px'>NO</div>
<div style='position:absolute;white-space:nowrap;line-height:1;font-size:11px;color:#000;-webkit-text-stroke:0.2px #000;left:779px;top:285px'>Single EOL (NC or NO)</div>
<div class='t' style='left:335px;top:322px;font-size:12.3px;font-weight:bold;color:#4a7fb8'>Quick help (Press F1 for the full help topic)</div>
<div class='btn' style='left:854px;top:331px;width:83px;height:23px'></div>
<div class='t dlg' style='left:854px;top:336px;width:83px;text-align:center;color:#a0a0a0'>Save</div>
<div class='a' style='left:946px;top:331px;width:83px;height:23px;border:1px solid #000;background:#f0f0f0;box-shadow:inset 1px 1px 0 #fff,inset -1px -1px 0 #696969,inset -2px -2px 0 #a0a0a0'></div>
<div class='t dlg' style='left:946px;top:336px;width:83px;text-align:center'>Cancel</div>
<svg class='a' style='left:0;top:0' width='1098' height='677' viewBox='0 0 1098 677'><rect x='457.5' y='397.5' width='503.5' height='173.5' fill='#eeeeee'/><rect x='457.5' y='397.5' width='503.5' height='60' fill='#cccccc'/><g stroke='#333' stroke-width='1.2' fill='none'><rect x='457.5' y='397.5' width='503.5' height='173.5'/><line x1='457.5' y1='419.4' x2='961' y2='419.4'/><line x1='457.5' y1='457.6' x2='961' y2='457.6'/><line x1='457.5' y1='480.2' x2='961' y2='480.2'/><line x1='457.5' y1='502.7' x2='961' y2='502.7'/><line x1='457.5' y1='525' x2='961' y2='525'/><line x1='457.5' y1='547.3' x2='961' y2='547.3'/><line x1='507.4' y1='419.4' x2='507.4' y2='547.3'/><line x1='560.6' y1='419.4' x2='560.6' y2='547.3'/><line x1='583.6' y1='419.4' x2='583.6' y2='547.3'/><line x1='608.6' y1='419.4' x2='608.6' y2='547.3'/><line x1='634.1' y1='419.4' x2='634.1' y2='547.3'/><line x1='659.2' y1='419.4' x2='659.2' y2='547.3'/><line x1='684.7' y1='419.4' x2='684.7' y2='547.3'/><line x1='709.8' y1='419.4' x2='709.8' y2='547.3'/><line x1='735.2' y1='419.4' x2='735.2' y2='547.3'/><line x1='760.3' y1='419.4' x2='760.3' y2='547.3'/><line x1='785.6' y1='419.4' x2='785.6' y2='547.3'/><line x1='810.8' y1='419.4' x2='810.8' y2='547.3'/><line x1='836.2' y1='419.4' x2='836.2' y2='547.3'/><line x1='861.3' y1='419.4' x2='861.3' y2='547.3'/><line x1='886.4' y1='419.4' x2='886.4' y2='547.3'/><line x1='911.8' y1='419.4' x2='911.8' y2='547.3'/><line x1='937.1' y1='419.4' x2='937.1' y2='547.3'/></g></svg>
<div class='t' style='left:457.5px;width:503.5px;top:402.0px;text-align:center;font-size:9.1px;-webkit-text-stroke:0.35px #111;color:#111'>24 Hour, Fire, Gas, and AUX AC Point Types, Single EOL Circuit Style, Point Response Selections</div>
<div class='t' style='left:457.5px;width:49.89999999999998px;top:424.7px;text-align:center;font-size:9.2px;-webkit-text-stroke:0.35px #111;color:#111'>Armed</div>
<div class='t' style='left:457.5px;width:49.89999999999998px;top:439.7px;text-align:center;font-size:9.2px;-webkit-text-stroke:0.35px #111;color:#111'>State</div>
<div class='t' style='left:507.4px;width:53.200000000000045px;top:424.7px;text-align:center;font-size:9.2px;-webkit-text-stroke:0.35px #111;color:#111'>Circuit State</div>
<div class='t' style='left:560.6px;width:23.0px;top:439.7px;text-align:center;font-size:9.2px;-webkit-text-stroke:0.35px #111;color:#111'>0</div>
<div class='t' style='left:583.6px;width:25.0px;top:439.7px;text-align:center;font-size:9.2px;-webkit-text-stroke:0.35px #111;color:#111'>1</div>
<div class='t' style='left:608.6px;width:25.5px;top:439.7px;text-align:center;font-size:9.2px;-webkit-text-stroke:0.35px #111;color:#111'>2</div>
<div class='t' style='left:634.1px;width:25.100000000000023px;top:439.7px;text-align:center;font-size:9.2px;-webkit-text-stroke:0.35px #111;color:#111'>3</div>
<div class='t' style='left:659.2px;width:25.5px;top:439.7px;text-align:center;font-size:9.2px;-webkit-text-stroke:0.35px #111;color:#111'>4</div>
<div class='t' style='left:684.7px;width:25.09999999999991px;top:439.7px;text-align:center;font-size:9.2px;-webkit-text-stroke:0.35px #111;color:#111'>5</div>
<div class='t' style='left:709.8px;width:25.40000000000009px;top:439.7px;text-align:center;font-size:9.2px;-webkit-text-stroke:0.35px #111;color:#111'>6</div>
<div class='t' style='left:735.2px;width:25.09999999999991px;top:439.7px;text-align:center;font-size:9.2px;-webkit-text-stroke:0.35px #111;color:#111'>7</div>
<div class='t' style='left:760.3px;width:25.300000000000068px;top:439.7px;text-align:center;font-size:9.2px;-webkit-text-stroke:0.35px #111;color:#111'>8</div>
<div class='t' style='left:785.6px;width:25.199999999999932px;top:439.7px;text-align:center;font-size:9.2px;-webkit-text-stroke:0.35px #111;color:#111'>9</div>
<div class='t' style='left:810.8px;width:25.40000000000009px;top:439.7px;text-align:center;font-size:9.2px;-webkit-text-stroke:0.35px #111;color:#111'>A</div>
<div class='t' style='left:836.2px;width:25.09999999999991px;top:439.7px;text-align:center;font-size:9.2px;-webkit-text-stroke:0.35px #111;color:#111'>B</div>
<div class='t' style='left:861.3px;width:25.100000000000023px;top:439.7px;text-align:center;font-size:9.2px;-webkit-text-stroke:0.35px #111;color:#111'>C</div>
<div class='t' style='left:886.4px;width:25.399999999999977px;top:439.7px;text-align:center;font-size:9.2px;-webkit-text-stroke:0.35px #111;color:#111'>D</div>
<div class='t' style='left:911.8px;width:25.300000000000068px;top:439.7px;text-align:center;font-size:9.2px;-webkit-text-stroke:0.35px #111;color:#111'>E</div>
<div class='t' style='left:937.1px;width:23.699999999999932px;top:439.7px;text-align:center;font-size:9.2px;-webkit-text-stroke:0.35px #111;color:#111'>F</div>
<div class='t' style='left:457.5px;width:49.89999999999998px;top:462.8px;text-align:center;font-size:9.2px;-webkit-text-stroke:0.15px #111;color:#111'>Armed</div>
<div class='t' style='left:507.4px;width:53.200000000000045px;top:462.8px;text-align:center;font-size:9.2px;-webkit-text-stroke:0.15px #111;color:#111'>Open</div>
<div class='t' style='left:560.6px;width:23.0px;top:462.8px;text-align:center;font-size:9.2px;-webkit-text-stroke:0.15px #111;color:#111'>I</div>
<div class='t' style='left:583.6px;width:25.0px;top:462.8px;text-align:center;font-size:9.2px;-webkit-text-stroke:0.15px #111;color:#111'>T</div>
<div class='t' style='left:608.6px;width:25.5px;top:462.8px;text-align:center;font-size:9.2px;-webkit-text-stroke:0.15px #111;color:#111'>I</div>
<div class='t' style='left:634.1px;width:25.100000000000023px;top:462.8px;text-align:center;font-size:9.2px;-webkit-text-stroke:0.15px #111;color:#111'>T</div>
<div class='t' style='left:709.8px;width:25.40000000000009px;top:462.8px;text-align:center;font-size:9.2px;-webkit-text-stroke:0.15px #111;color:#111'>I</div>
<div class='t' style='left:735.2px;width:25.09999999999991px;top:462.8px;text-align:center;font-size:9.2px;-webkit-text-stroke:0.15px #111;color:#111'>T</div>
<div class='t' style='left:760.3px;width:25.300000000000068px;top:462.8px;text-align:center;font-size:9.2px;-webkit-text-stroke:0.15px #111;color:#111'>S</div>
<div class='t' style='left:785.6px;width:25.199999999999932px;top:462.8px;text-align:center;font-size:9.2px;-webkit-text-stroke:0.15px #111;color:#111'>T</div>
<div class='t' style='left:810.8px;width:25.40000000000009px;top:462.8px;text-align:center;font-size:9.2px;-webkit-text-stroke:0.15px #111;color:#111'>S</div>
<div class='t' style='left:861.3px;width:25.100000000000023px;top:462.8px;text-align:center;font-size:9.2px;-webkit-text-stroke:0.15px #111;color:#111'>S</div>
<div class='t' style='left:457.5px;width:49.89999999999998px;top:485.4px;text-align:center;font-size:9.2px;-webkit-text-stroke:0.15px #111;color:#111'>Armed</div>
<div class='t' style='left:507.4px;width:53.200000000000045px;top:485.4px;text-align:center;font-size:9.2px;-webkit-text-stroke:0.15px #111;color:#111'>Short</div>
<div class='t' style='left:560.6px;width:23.0px;top:485.4px;text-align:center;font-size:9.2px;-webkit-text-stroke:0.15px #111;color:#111'>I</div>
<div class='t' style='left:583.6px;width:25.0px;top:485.4px;text-align:center;font-size:9.2px;-webkit-text-stroke:0.15px #111;color:#111'>I</div>
<div class='t' style='left:608.6px;width:25.5px;top:485.4px;text-align:center;font-size:9.2px;-webkit-text-stroke:0.15px #111;color:#111'>T</div>
<div class='t' style='left:634.1px;width:25.100000000000023px;top:485.4px;text-align:center;font-size:9.2px;-webkit-text-stroke:0.15px #111;color:#111'>T</div>
<div class='t' style='left:659.2px;width:25.5px;top:485.4px;text-align:center;font-size:9.2px;-webkit-text-stroke:0.15px #111;color:#111'>I</div>
<div class='t' style='left:684.7px;width:25.09999999999991px;top:485.4px;text-align:center;font-size:9.2px;-webkit-text-stroke:0.15px #111;color:#111'>T</div>
<div class='t' style='left:760.3px;width:25.300000000000068px;top:485.4px;text-align:center;font-size:9.2px;-webkit-text-stroke:0.15px #111;color:#111'>T</div>
<div class='t' style='left:785.6px;width:25.199999999999932px;top:485.4px;text-align:center;font-size:9.2px;-webkit-text-stroke:0.15px #111;color:#111'>S</div>
<div class='t' style='left:836.2px;width:25.09999999999991px;top:485.4px;text-align:center;font-size:9.2px;-webkit-text-stroke:0.15px #111;color:#111'>S</div>
<div class='t' style='left:861.3px;width:25.100000000000023px;top:485.4px;text-align:center;font-size:9.2px;-webkit-text-stroke:0.15px #111;color:#111'>S</div>
<div class='t' style='left:457.5px;width:49.89999999999998px;top:507.9px;text-align:center;font-size:9.2px;-webkit-text-stroke:0.15px #111;color:#111'>Disarmed</div>
<div class='t' style='left:507.4px;width:53.200000000000045px;top:507.9px;text-align:center;font-size:9.2px;-webkit-text-stroke:0.15px #111;color:#111'>Open</div>
<div class='t' style='left:560.6px;width:23.0px;top:507.9px;text-align:center;font-size:9.2px;-webkit-text-stroke:0.15px #111;color:#111'>I</div>
<div class='t' style='left:583.6px;width:25.0px;top:507.9px;text-align:center;font-size:9.2px;-webkit-text-stroke:0.15px #111;color:#111'>T</div>
<div class='t' style='left:608.6px;width:25.5px;top:507.9px;text-align:center;font-size:9.2px;-webkit-text-stroke:0.15px #111;color:#111'>I</div>
<div class='t' style='left:634.1px;width:25.100000000000023px;top:507.9px;text-align:center;font-size:9.2px;-webkit-text-stroke:0.15px #111;color:#111'>T</div>
<div class='t' style='left:709.8px;width:25.40000000000009px;top:507.9px;text-align:center;font-size:9.2px;-webkit-text-stroke:0.15px #111;color:#111'>I</div>
<div class='t' style='left:735.2px;width:25.09999999999991px;top:507.9px;text-align:center;font-size:9.2px;-webkit-text-stroke:0.15px #111;color:#111'>T</div>
<div class='t' style='left:760.3px;width:25.300000000000068px;top:507.9px;text-align:center;font-size:9.2px;-webkit-text-stroke:0.15px #111;color:#111'>S</div>
<div class='t' style='left:785.6px;width:25.199999999999932px;top:507.9px;text-align:center;font-size:9.2px;-webkit-text-stroke:0.15px #111;color:#111'>T</div>
<div class='t' style='left:810.8px;width:25.40000000000009px;top:507.9px;text-align:center;font-size:9.2px;-webkit-text-stroke:0.15px #111;color:#111'>S</div>
<div class='t' style='left:861.3px;width:25.100000000000023px;top:507.9px;text-align:center;font-size:9.2px;-webkit-text-stroke:0.15px #111;color:#111'>S</div>
<div class='t' style='left:457.5px;width:49.89999999999998px;top:530.2px;text-align:center;font-size:9.2px;-webkit-text-stroke:0.15px #111;color:#111'>Disarmed</div>
<div class='t' style='left:507.4px;width:53.200000000000045px;top:530.2px;text-align:center;font-size:9.2px;-webkit-text-stroke:0.15px #111;color:#111'>Short</div>
<div class='t' style='left:560.6px;width:23.0px;top:530.2px;text-align:center;font-size:9.2px;-webkit-text-stroke:0.15px #111;color:#111'>I</div>
<div class='t' style='left:583.6px;width:25.0px;top:530.2px;text-align:center;font-size:9.2px;-webkit-text-stroke:0.15px #111;color:#111'>I</div>
<div class='t' style='left:608.6px;width:25.5px;top:530.2px;text-align:center;font-size:9.2px;-webkit-text-stroke:0.15px #111;color:#111'>T</div>
<div class='t' style='left:634.1px;width:25.100000000000023px;top:530.2px;text-align:center;font-size:9.2px;-webkit-text-stroke:0.15px #111;color:#111'>T</div>
<div class='t' style='left:659.2px;width:25.5px;top:530.2px;text-align:center;font-size:9.2px;-webkit-text-stroke:0.15px #111;color:#111'>I</div>
<div class='t' style='left:684.7px;width:25.09999999999991px;top:530.2px;text-align:center;font-size:9.2px;-webkit-text-stroke:0.15px #111;color:#111'>T</div>
<div class='t' style='left:760.3px;width:25.300000000000068px;top:530.2px;text-align:center;font-size:9.2px;-webkit-text-stroke:0.15px #111;color:#111'>T</div>
<div class='t' style='left:785.6px;width:25.199999999999932px;top:530.2px;text-align:center;font-size:9.2px;-webkit-text-stroke:0.15px #111;color:#111'>S</div>
<div class='t' style='left:836.2px;width:25.09999999999991px;top:530.2px;text-align:center;font-size:9.2px;-webkit-text-stroke:0.15px #111;color:#111'>S</div>
<div class='t' style='left:861.3px;width:25.100000000000023px;top:530.2px;text-align:center;font-size:9.2px;-webkit-text-stroke:0.15px #111;color:#111'>S</div>
<div class='t' style='left:457.5px;width:503px;top:552px;text-align:center;font-size:9px;color:#111;-webkit-text-stroke:0.2px #111'><b>Key:</b> <b>I</b> = instant alarm, <b>S</b> = supervisory alarm, <b>T</b> = trouble, <b>blank</b> = no response</div>
</body></html>
